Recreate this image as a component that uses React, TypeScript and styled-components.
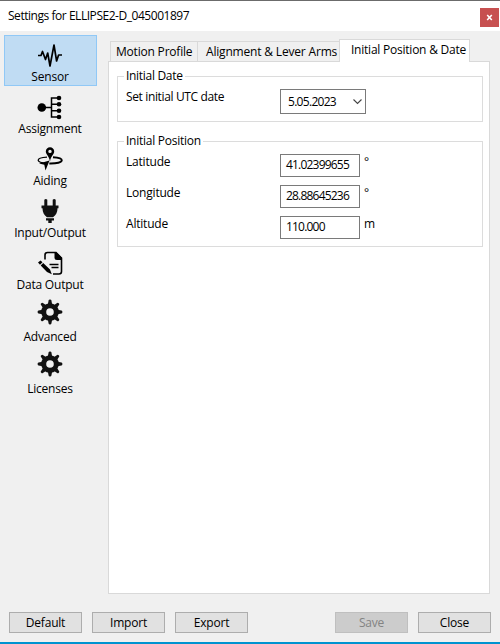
import React from "react";
import styled, { createGlobalStyle } from "styled-components";

const Global = createGlobalStyle`
  *, *::before, *::after { box-sizing: border-box; }
  html, body { margin: 0; padding: 0; background: #f0f0f0; }
  body { font: 12px/16px "Open Sans", "Noto Sans", sans-serif; color: #000; }
  button, input { font: inherit; color: inherit; letter-spacing: inherit; }
`;

const Window = styled.div`
  width: 500px;
  height: 644px;
  display: flex;
  flex-direction: column;
  background: #f0f0f0;
  border-top: 1px solid #6b6b6b;
  border-bottom: 2px solid #0093d0;
  overflow: hidden;
`;

const TitleBar = styled.header`
  height: 30px;
  flex: none;
  display: flex;
  justify-content: space-between;
  padding: 7px 1px 0 8px;
  background: #fff;
`;

const Text = styled.span<{ $track?: number }>`
  white-space: pre;
  letter-spacing: ${(p) => p.$track ?? -0.2}px;
`;

const CloseBox = styled.button`
  width: 19px;
  height: 19px;
  padding: 0;
  border: 0;
  display: flex;
  align-items: center;
  justify-content: center;
  background: #c75050;
`;

const Body = styled.div`
  flex: none;
  height: 563px;
  display: flex;
  padding: 4px 0 0 4px;
`;

const Sidebar = styled.nav`
  width: 93px;
  flex: none;
  display: flex;
  flex-direction: column;
  gap: 1px;
`;

const NavItem = styled.button<{ $active?: boolean; $raise?: number }>`
  height: 51px;
  flex: none;
  padding: ${(p) => 6 - (p.$raise ?? 0)}px 1px 0 0;
  display: flex;
  flex-direction: column;
  align-items: center;
  gap: ${(p) => 1 + (p.$raise ?? 0)}px;
  border: 1px solid ${(p) => (p.$active ? "#90c8f6" : "transparent")};
  background: ${(p) => (p.$active ? "#c0dcf3" : "transparent")};

  svg { display: block; flex: none; }
`;

const Main = styled.main`
  width: 382px;
  margin: 4px 0 0 11px;
  display: flex;
  flex-direction: column;
`;

const TabRow = styled.div`
  height: 23px;
  flex: none;
  display: flex;
  align-items: flex-end;
  padding-left: 2px;
  z-index: 1;
`;

const Tab = styled.div<{ $width: number; $indent: number; $active?: boolean }>`
  width: ${(p) => p.$width}px;
  height: ${(p) => (p.$active ? 23 : 21)}px;
  padding: 2px 0 0 ${(p) => p.$indent}px;
  border: 1px solid #d9d9d9;
  border-bottom: ${(p) => (p.$active ? "0" : "1px solid #d9d9d9")};
  background: ${(p) => (p.$active ? "#fff" : "#f0f0f0")};

  &:not(:last-child) { border-right: 0; }
`;

const Panel = styled.section`
  height: 533px;
  flex: none;
  margin-top: -1px;
  padding: 6px 6px 0 8px;
  border: 1px solid #d9d9d9;
  background: #fff;
`;

const Group = styled.fieldset<{ $height: number }>`
  height: ${(p) => p.$height}px;
  min-width: 0;
  margin: 0 0 11px;
  padding: 0 0 0 8px;
  border: 1px solid #dcdcdc;
`;

const Legend = styled.legend`
  height: 16px;
  margin-left: -2px;
  padding: 0 2px;
`;

const Row = styled.div`
  height: 31px;
  display: grid;
  grid-template-columns: 154px auto 1fr;
  align-items: start;
  padding-top: 5px;
`;

const Field = styled.div`
  width: 80px;
  height: 23px;
  padding: 2px 0 0 5px;
  border: 1px solid #7a7a7a;
  background: #fff;
`;

const DateField = styled(Field)`
  width: 86px;
  height: 25px;
  padding: 4px 3px 0 7px;
  display: flex;
  justify-content: space-between;

  svg { margin-top: 5px; }
`;

const Unit = styled.div`
  padding-left: 4px;
`;

const Footer = styled.footer`
  display: flex;
  gap: 10px;
  padding: 18px 9px 0;
`;

const PushButton = styled.button<{ $disabled?: boolean }>`
  width: 73px;
  height: 21px;
  padding: 0;
  border: 1px solid ${(p) => (p.$disabled ? "#bfbfbf" : "#adadad")};
  background: ${(p) => (p.$disabled ? "#cccccc" : "#e1e1e1")};
  color: ${(p) => (p.$disabled ? "#838383" : "#000")};
  line-height: 18px;
`;

const Spacer = styled.div`
  flex: 1;
`;

const Icon = ({ children }: { children: React.ReactNode }) => (
  <svg width="26" height="26" viewBox="0 0 26 26">{children}</svg>
);

const Wave = () => (
  <Icon>
    <path d="M1 13.5h3l1.500-4 3 8 2.200-6.500L13 24l4-21 2.600 16 2-6H25" fill="none" stroke="#000" strokeWidth="1.700" strokeLinejoin="round" />
  </Icon>
);

const Tree = () => (
  <Icon>
    <circle cx="4.800" cy="13.500" r="4.300" />
    <path d="M4 13.500h11M21 4h-6.500v19H21M14.500 10.300H21M14.500 16.700H21" fill="none" stroke="#000" strokeWidth="1.500" />
    <circle cx="22" cy="4" r="2.300" />
    <circle cx="22" cy="10.300" r="2.300" />
    <circle cx="22" cy="16.700" r="2.300" />
    <circle cx="22" cy="23" r="2.300" />
  </Icon>
);

const Aiding = () => (
  <Icon>
    <path d="M10 11.200C4.500 11.500 1.200 12.800 1.200 14.300c0 1.300 2.200 2.200 5.500 2.700" fill="none" stroke="#000" strokeWidth="1.300" />
    <path d="M16 11.200c5.500.3 8.800 1.600 8.800 3.100 0 2-5 3.400-12.500 3.200" fill="none" stroke="#000" strokeWidth="1.900" />
    <path fillRule="evenodd" d="M13 1.300a4.200 4.200 0 0 1 4.200 4.200c0 3-3.400 4.500-4.200 10-.8-5.500-4.200-7-4.200-10A4.200 4.200 0 0 1 13 1.300zm0 2.400a1.700 1.700 0 1 0 0 3.400 1.700 1.700 0 0 0 0-3.400z" />
    <path d="M12.500 14.500 8.500 24.500 7.300 18.800 2 17.600z" />
  </Icon>
);

const Plug = () => (
  <Icon>
    <path fill="#111" d="M7.300 1.800q1.500-1.600 3 0V7.500h5.400V1.800q1.500-1.600 3 0V7.500H21.500v2.700h-1c0 4-1.500 7-4.500 9h-6c-3-2-4.500-5-4.500-9h-1V7.500h2.800zM9 20.300h8v2.200h-2.300V25h-3.400v-2.500H9z" />
  </Icon>
);

const DataOutput = () => (
  <Icon>
    <path d="M8 9.500V5Q8 2.500 10.500 2.500h8.500l5.500 5.500v13.500Q24.500 24 22 24h-6" fill="none" stroke="#000" strokeWidth="1.600" />
    <path d="M17.500 2.500h2L25 8v2h-5q-2.500 0-2.500-2.500z" />
    <path d="M12.500 14.500h9M14.500 17.500h7" stroke="#000" strokeWidth="1.300" />
    <path d="M1 12.500 3.500 10.500 5.500 12.300 3 14.800zM3.700 15.400 6.200 13 13 19.500 14.800 24.200 10 22z" />
  </Icon>
);

const gearTeeth = [0, 45, 90, 135, 180, 225, 270, 315];

const Gear = () => (
  <Icon>
    <circle cx="13" cy="13" r="6.300" fill="none" stroke="#111" strokeWidth="5" />
    {gearTeeth.map((a) => (
      <path key={a} fill="#111" d="M10.800 5.500 11.600 1.500Q11.800.600 13 .600T14.400 1.500L15.200 5.500z" transform={`rotate(${a} 13 13)`} />
    ))}
  </Icon>
);

const navItems = [
  { label: "Sensor", icon: Wave, active: true, raise: 0 },
  { label: "Assignment", icon: Tree, raise: 0 },
  { label: "Aiding", icon: Aiding, raise: 0 },
  { label: "Input/Output", icon: Plug, raise: 0 },
  { label: "Data Output", icon: DataOutput, raise: 0 },
  { label: "Advanced", icon: Gear, raise: 3 },
  { label: "Licenses", icon: Gear, raise: 3 },
];

const positionRows = [
  { label: "Latitude", value: "41.02399655", unit: "°" },
  { label: "Longitude", value: "28.88645236", unit: "°" },
  { label: "Altitude", value: "110.000", unit: "m" },
];

export default function App() {
  return (
    <>
      <Global />
      <Window>
        <TitleBar>
          <Text $track={-0.46}>Settings for ELLIPSE2-D_045001897</Text>
          <CloseBox aria-label="Close">
            <svg width="7" height="7" viewBox="0 0 7 7">
              <path d="M1.200 1 5.800 6M5.800 1 1.200 6" stroke="#fff" strokeWidth="1.600" />
            </svg>
          </CloseBox>
        </TitleBar>
        <Body>
          <Sidebar>
            {navItems.map(({ label, icon: Glyph, active, raise }) => (
              <NavItem key={label} $active={active} $raise={raise}>
                <Glyph />
                <Text>{label}</Text>
              </NavItem>
            ))}
          </Sidebar>
          <Main>
            <TabRow>
              <Tab $width={87} $indent={5}><Text>Motion Profile</Text></Tab>
              <Tab $width={142} $indent={8}><Text $track={-0.18}>Alignment &amp; Lever Arms</Text></Tab>
              <Tab $width={131} $indent={11} $active><Text $track={-0.23}>Initial Position &amp; Date</Text></Tab>
            </TabRow>
            <Panel>
              <Group $height={54}>
                <Legend><Text $track={-0.3}>Initial Date</Text></Legend>
                <Row>
                  <Text $track={-0.36}>Set initial UTC date</Text>
                  <DateField>
                    <Text $track={-0.7}>5.05.2023</Text>
                    <svg width="9" height="6" viewBox="0 0 9 6">
                      <path d="M.500.500 4.500 4.500 8.500.500" fill="none" stroke="#444" strokeWidth="1.100" />
                    </svg>
                  </DateField>
                </Row>
              </Group>
              <Group $height={114}>
                <Legend><Text $track={-0.25}>Initial Position</Text></Legend>
                {positionRows.map((r) => (
                  <Row key={r.label}>
                    <Text>{r.label}</Text>
                    <Field><Text $track={-0.8}>{r.value}</Text></Field>
                    <Unit>{r.unit}</Unit>
                  </Row>
                ))}
              </Group>
            </Panel>
          </Main>
        </Body>
        <Footer>
          <PushButton><Text>Default</Text></PushButton>
          <PushButton><Text>Import</Text></PushButton>
          <PushButton><Text>Export</Text></PushButton>
          <Spacer />
          <PushButton $disabled><Text>Save</Text></PushButton>
          <PushButton><Text>Close</Text></PushButton>
        </Footer>
      </Window>
    </>
  );
}
